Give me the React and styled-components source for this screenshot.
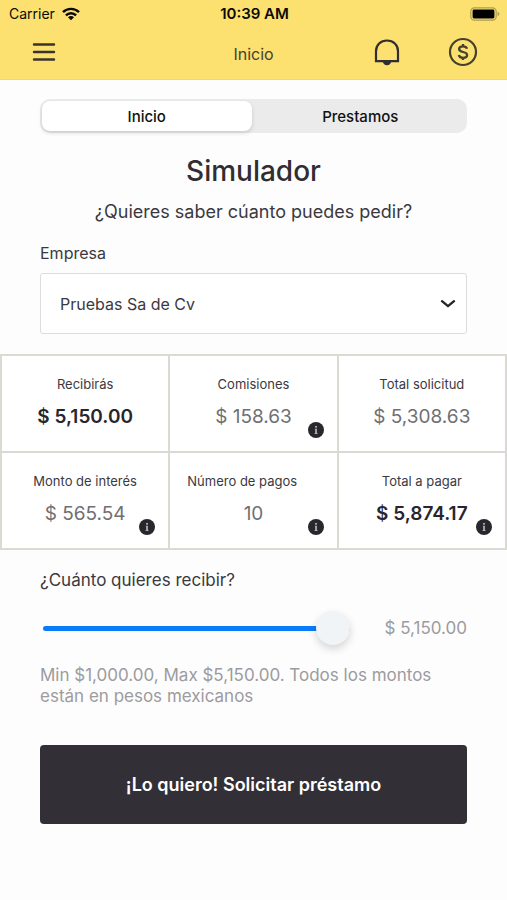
import React, { useState } from "react";
import styled, { createGlobalStyle } from "styled-components";

const GlobalStyle = createGlobalStyle`
  *, *::before, *::after { box-sizing: border-box; }
  body {
    margin: 0;
    background: #fdfdfd;
    color: #3b393f;
    font-family: Inter, "Liberation Sans", sans-serif;
  }
  button, select, input { font: inherit; color: inherit; }
  h1, p, dl, dt, dd { margin: 0; }
`;

const TopArea = styled.header`
  background: #fce070;
  border-bottom: 1px solid #e9d68a;
`;

const StatusBar = styled.div`
  display: grid;
  grid-template-columns: 1fr auto 1fr;
  align-items: center;
  height: 27px;
  padding: 0 7px 0 9px;
  color: #0b0a05;
  font-size: 14px;
`;

const Carrier = styled.span`
  display: flex;
  align-items: center;
  gap: 7px;
`;

const Clock = styled.time`
  font-size: 15px;
  font-weight: 600;
`;

const BatterySlot = styled.span`
  display: flex;
  justify-content: flex-end;
`;

const NavBar = styled.nav`
  display: grid;
  grid-template-columns: 1fr auto 1fr;
  align-items: center;
  height: 52px;
  padding: 0 28px 3px;
`;

const NavTitle = styled.span`
  padding-top: 4px;
  font-size: 16px;
  color: #45412f;
`;

const NavActions = styled.div`
  display: flex;
  justify-content: flex-end;
  gap: 44px;
`;

const IconButton = styled.button`
  display: flex;
  align-items: center;
  justify-content: center;
  width: 32px;
  height: 32px;
  padding: 0;
  border: 0;
  background: none;
  cursor: pointer;
`;

const Section = styled.section`
  padding: 0 40px;
`;

const Segments = styled.div`
  display: grid;
  grid-template-columns: 1fr 1fr;
  gap: 4px;
  height: 34px;
  margin-top: 19px;
  padding: 2px;
  border-radius: 10px;
  background: #ebebec;
`;

const Segment = styled.button`
  padding: 0;
  border: 0;
  border-radius: 8px;
  background: ${(p) => (p.$active ? "#ffffff" : "transparent")};
  box-shadow: ${(p) => (p.$active ? "0 2px 4px rgba(0, 0, 0, 0.14)" : "none")};
  color: #111111;
  font-size: 15px;
  font-weight: 500;
  cursor: pointer;
`;

const Title = styled.h1`
  margin-top: 20px;
  color: #302e33;
  font-size: 28px;
  font-weight: 500;
  line-height: 36px;
  text-align: center;
`;

const Subtitle = styled.p`
  margin-top: 10px;
  font-size: 18px;
  line-height: 26px;
  text-align: center;
`;

const FieldLabel = styled.label`
  display: block;
  margin-top: ${(p) => (p.$large ? 20 : 18)}px;
  font-size: ${(p) => (p.$large ? 17 : 16)}px;
  line-height: 20px;
`;

const SelectBox = styled.div`
  position: relative;
  margin-top: 10px;

  svg {
    position: absolute;
    top: 26px;
    right: 11px;
    pointer-events: none;
  }
`;

const Select = styled.select`
  display: block;
  width: 100%;
  height: 61px;
  padding: 0 40px 0 19px;
  border: 1px solid #dcdcd8;
  border-radius: 3px;
  background: #ffffff;
  font-size: 16px;
  appearance: none;
`;

const Summary = styled.dl`
  display: grid;
  grid-template-columns: repeat(3, 1fr);
  grid-auto-rows: 95px;
  gap: 2px;
  margin-top: 20px;
  padding: 2px;
  background: #dad9d2;
`;

const Cell = styled.div`
  position: relative;
  padding: 19px 17px 0;
  background: #ffffff;
  text-align: center;
`;

const CellLabel = styled.dt`
  font-size: 13px;
  line-height: 18px;
  text-align: ${(p) => (p.$start ? "left" : "center")};
  white-space: nowrap;
`;

const CellValue = styled.dd`
  margin-top: 11px;
  color: ${(p) => (p.$strong ? "#28262c" : "#706f73")};
  font-size: 19px;
  font-weight: ${(p) => (p.$strong ? 600 : 400)};
  line-height: 26px;
  white-space: nowrap;
`;

const InfoButton = styled.button`
  position: absolute;
  right: 13px;
  bottom: 13px;
  display: flex;
  padding: 0;
  border: 0;
  background: none;
  cursor: pointer;
`;

const SliderRow = styled.div`
  display: flex;
  align-items: center;
  gap: 35px;
  margin-top: 21px;
  padding-left: 3px;
`;

const Slider = styled.input`
  flex: 1;
  min-width: 0;
  height: 34px;
  margin: 0;
  background: none;
  appearance: none;

  &::-webkit-slider-runnable-track {
    height: 5px;
    border-radius: 3px;
    background: linear-gradient(
      to right,
      #0a7cf6 var(--fill),
      #dcdfe3 var(--fill)
    );
  }

  &::-webkit-slider-thumb {
    width: 34px;
    height: 34px;
    margin-top: -15px;
    border-radius: 50%;
    background: #f0f4f7;
    box-shadow: 0 4px 9px rgba(0, 0, 0, 0.16);
    appearance: none;
  }
`;

const Amount = styled.output`
  color: #9c9b9e;
  font-size: 17px;
  white-space: nowrap;
`;

const Hint = styled.p`
  margin-top: 20px;
  padding-right: 32px;
  color: #9c9b9e;
  font-size: 17px;
  line-height: 21px;
`;

const SubmitButton = styled.button`
  display: block;
  width: 100%;
  height: 79px;
  margin: 38px 0;
  border: 0;
  border-radius: 4px;
  background: #323036;
  color: #ffffff;
  font-size: 18px;
  font-weight: 600;
  cursor: pointer;
`;

const WifiIcon = () => (
  <svg width="18" height="14" viewBox="0 0 18 14" aria-hidden="true">
    <g fill="none" stroke="#0b0a05" strokeWidth="2.4">
      <path d="M1 5.2C5.4.7 12.6.7 17 5.2" />
      <path d="M3.9 8.4c2.8-2.9 7.4-2.9 10.2 0" />
    </g>
    <path d="M9 13.3 6 10.2c1.7-1.6 4.3-1.6 6 0z" fill="#0b0a05" />
  </svg>
);

const BatteryIcon = () => (
  <svg width="30" height="14" viewBox="0 0 30 14" aria-hidden="true">
    <rect x="0.8" y="0.8" width="25.4" height="12.4" rx="3.6" fill="none" stroke="#ae9c52" strokeWidth="1.2" />
    <rect x="2.6" y="2.6" width="21.8" height="8.8" rx="1.4" fill="#000000" />
    <path d="M27.6 4.8c2.4.6 2.4 3.8 0 4.4z" fill="#ae9c52" />
  </svg>
);

const MenuIcon = () => (
  <svg width="24" height="20" viewBox="0 0 24 20" aria-hidden="true">
    <path d="M2 2.5h20M2 10h20M2 17.5h20" stroke="#38342a" strokeWidth="2.4" strokeLinecap="round" />
  </svg>
);

const BellIcon = () => (
  <svg width="28" height="28" viewBox="0 0 28 28" aria-hidden="true">
    <path d="M3 23.2V13.2C3 6.8 7.7 2.5 14 2.5S25 6.8 25 13.2v10z" fill="none" stroke="#302e30" strokeWidth="2.2" />
    <path d="M9.6 23.2h8.8c-.6 2.7-2.2 4-4.4 4s-3.8-1.3-4.4-4z" fill="#302e30" />
  </svg>
);

const CoinIcon = () => (
  <svg width="30" height="30" viewBox="0 0 30 30" aria-hidden="true">
    <g fill="none" stroke="#46412f" strokeWidth="2.2">
      <circle cx="15" cy="15" r="13" />
      <path d="M19 11.8c-.5-1.700-2-2.500-4-2.500-2.300 0-3.900 1-3.900 2.700 0 4.200 8 1.800 8 6 0 1.800-1.700 2.800-4.100 2.800-2.200 0-3.800-.9-4.200-2.700M15 7v2.300M15 20.800v2.300" strokeWidth="2.300" />
    </g>
  </svg>
);

const ChevronIcon = () => (
  <svg width="16" height="10" viewBox="0 0 16 10" aria-hidden="true">
    <path d="m2 2.2 6 5 6-5" fill="none" stroke="#28262c" strokeWidth="2.4" strokeLinecap="round" strokeLinejoin="round" />
  </svg>
);

const InfoIcon = () => (
  <svg width="16" height="16" viewBox="0 0 16 16" aria-hidden="true">
    <circle cx="8" cy="8" r="8" fill="#29272d" />
    <rect x="7.200" y="4" width="1.700" height="1.600" fill="#c4c4c6" />
    <path d="M6.800 6.700H8.900v4.500h.7v.8H6.500v-.8h.7V7.500h-.4z" fill="#b4b4b7" />
  </svg>
);

const FIGURES = [
  { label: "Recibirás", value: "$ 5,150.00", strong: true },
  { label: "Comisiones", value: "$ 158.63", info: true },
  { label: "Total solicitud", value: "$ 5,308.63" },
  { label: "Monto de interés", value: "$ 565.54", info: true },
  { label: "Número de pagos", value: "10", info: true, start: true },
  { label: "Total a pagar", value: "$ 5,874.17", info: true, strong: true },
];

const TABS = ["Inicio", "Prestamos"];
const MIN = 1000;
const MAX = 5150;

const money = (n) =>
  "$ " + n.toLocaleString("en-US", { minimumFractionDigits: 2 });

export default function App() {
  const [tab, setTab] = useState("Inicio");
  const [amount, setAmount] = useState(MAX);
  const fill = ((amount - MIN) / (MAX - MIN)) * 100;

  return (
    <>
      <GlobalStyle />
      <TopArea>
        <StatusBar>
          <Carrier>
            Carrier <WifiIcon />
          </Carrier>
          <Clock>10:39 AM</Clock>
          <BatterySlot>
            <BatteryIcon />
          </BatterySlot>
        </StatusBar>
        <NavBar>
          <IconButton aria-label="Menú">
            <MenuIcon />
          </IconButton>
          <NavTitle>Inicio</NavTitle>
          <NavActions>
            <IconButton aria-label="Notificaciones">
              <BellIcon />
            </IconButton>
            <IconButton aria-label="Préstamos">
              <CoinIcon />
            </IconButton>
          </NavActions>
        </NavBar>
      </TopArea>
      <main>
        <Section>
          <Segments>
            {TABS.map((name) => (
              <Segment
                key={name}
                type="button"
                $active={tab === name}
                aria-pressed={tab === name}
                onClick={() => setTab(name)}
              >
                {name}
              </Segment>
            ))}
          </Segments>
          <Title>Simulador</Title>
          <Subtitle>¿Quieres saber cúanto puedes pedir?</Subtitle>
          <FieldLabel htmlFor="empresa">Empresa</FieldLabel>
          <SelectBox>
            <Select id="empresa">
              <option>Pruebas Sa de Cv</option>
            </Select>
            <ChevronIcon />
          </SelectBox>
        </Section>
        <Summary>
          {FIGURES.map((f) => (
            <Cell key={f.label}>
              <CellLabel $start={f.start}>{f.label}</CellLabel>
              <CellValue $strong={f.strong}>{f.value}</CellValue>
              {f.info && (
                <InfoButton type="button" aria-label={`Información: ${f.label}`}>
                  <InfoIcon />
                </InfoButton>
              )}
            </Cell>
          ))}
        </Summary>
        <Section>
          <FieldLabel htmlFor="monto" $large>
            ¿Cuánto quieres recibir?
          </FieldLabel>
          <SliderRow>
            <Slider
              id="monto"
              type="range"
              min={MIN}
              max={MAX}
              step={50}
              value={amount}
              onChange={(e) => setAmount(Number(e.target.value))}
              style={{ "--fill": `${fill}%` }}
            />
            <Amount htmlFor="monto">{money(amount)}</Amount>
          </SliderRow>
          <Hint>
            Min $1,000.00, Max $5,150.00. Todos los montos están en pesos
            mexicanos
          </Hint>
          <SubmitButton type="button">¡Lo quiero! Solicitar préstamo</SubmitButton>
        </Section>
      </main>
    </>
  );
}
